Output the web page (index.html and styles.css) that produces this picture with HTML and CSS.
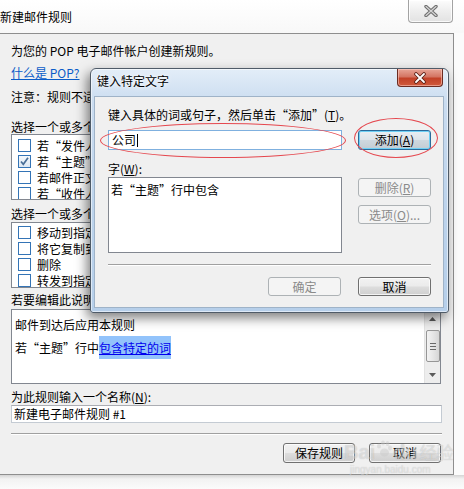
FILE: index.html
```html
<!DOCTYPE html>
<html lang="zh-CN">
<head>
<meta charset="utf-8">
<title>新建邮件规则</title>
<link rel="stylesheet" href="styles.css">
</head>
<body>
<div class="screen">
  <div class="win">
    <div class="win-title">
      <span class="win-title-text">新建邮件规则</span>
      <div class="win-close">
        <svg width="16" height="12" viewBox="0 0 16 12"><path d="M3 1.5 L13 10.5 M13 1.5 L3 10.5" stroke="#6e6e6e" stroke-width="3.4" stroke-linecap="round"/><path d="M3 1.5 L13 10.5 M13 1.5 L3 10.5" stroke="#d6d6d6" stroke-width="1.2" stroke-linecap="round"/></svg>
      </div>
    </div>
    <div class="win-main">
      <div class="client">
        <p class="t">为您的 POP 电子邮件帐户创建新规则。</p>
        <a class="t link" href="#">什么是 POP?</a>
        <p class="t note">注意：规则不适用于 IMAP、HTTP 或 Exchange 帐户。</p>
        <p class="t lbl1">选择一个或多个条件:</p>
        <div class="listbox lb1">
          <div class="item"><span class="cb"></span>若“发件人”行中包含特定的词</div>
          <div class="item"><span class="cb checked"><svg width="11" height="11" viewBox="0 0 11 11"><path d="M2 5.5 L4.3 8.3 L9 1.8" fill="none" stroke="#4a6f98" stroke-width="1.7"/></svg></span>若“主题”行中包含特定的词</div>
          <div class="item"><span class="cb"></span>若邮件正文中包含特定的词</div>
          <div class="item"><span class="cb"></span>若“收件人”行中包含特定的词</div>
        </div>
        <p class="t lbl2">选择一个或多个操作:</p>
        <div class="listbox lb2">
          <div class="item"><span class="cb"></span>移动到指定文件夹</div>
          <div class="item"><span class="cb"></span>将它复制到指定文件夹</div>
          <div class="item"><span class="cb"></span>删除</div>
          <div class="item"><span class="cb"></span>转发到指定人员或分发列表</div>
        </div>
        <p class="t lbl3">若要编辑此说明，请单击带下划线的值:</p>
        <div class="desc">
          <div class="desc-text">
            <div class="d1">邮件到达后应用本规则</div>
            <div class="d2">若“主题”行中<a class="hl" href="#">包含特定的词</a></div>
          </div>
          <div class="sb">
            <div class="sb-arrow"><svg width="7" height="4" viewBox="0 0 7 4"><path d="M0 4 L3.5 0 L7 4 Z" fill="#5a5a5a"/></svg></div>
            <div class="sb-thumb"><span></span><span></span><span></span></div>
            <div class="sb-arrow sb-down"><svg width="7" height="4" viewBox="0 0 7 4"><path d="M0 0 L3.5 4 L7 0 Z" fill="#5a5a5a"/></svg></div>
          </div>
        </div>
        <p class="t lbl4">为此规则输入一个名称(<u>N</u>):</p>
        <div class="name">新建电子邮件规则 #1</div>
        <div class="sep"></div>
        <div class="actions">
          <div class="btn">保存规则</div>
          <div class="btn">取消</div>
        </div>
      </div>
    </div>
    <div class="bottom-frame"></div>
  </div>

  <div class="dlg">
    <div class="dlg-title">
      <span class="dlg-title-text">键入特定文字</span>
      <div class="dlg-close">
        <svg width="16" height="12" viewBox="0 0 16 12"><path d="M4 2 L12 10 M12 2 L4 10" stroke="#5a2016" stroke-width="3.6" stroke-linecap="round"/><path d="M4 2 L12 10 M12 2 L4 10" stroke="#ffffff" stroke-width="1.8" stroke-linecap="round"/></svg>
      </div>
    </div>
    <div class="dlg-client">
      <p class="t prompt">键入具体的词或句子，然后单击“添加”(<u>T</u>)。</p>
      <div class="row1">
        <div class="input">公司<span class="caret"></span></div>
        <div class="btn btn-d focus">添加(<u>A</u>)</div>
      </div>
      <p class="t lbl-w">字(<u>W</u>):</p>
      <div class="row2">
        <div class="wordlist">若“主题”行中包含</div>
        <div class="side-btns">
          <div class="btn btn-d disabled">删除(<u>R</u>)</div>
          <div class="btn btn-d disabled">选项(<u>O</u>)...</div>
        </div>
      </div>
      <div class="dsep"></div>
      <div class="row3">
        <div class="btn btn-d disabled">确定</div>
        <div class="btn btn-d">取消</div>
      </div>
    </div>
  </div>

  <div class="ring ring1"></div>
  <div class="ring ring2"></div>

  <div class="watermark">
    <div class="wm-logo">Bai<svg class="paw" width="18" height="18" viewBox="0 0 18 18"><ellipse cx="4" cy="6" rx="2" ry="2.6"/><ellipse cx="8" cy="3" rx="2" ry="2.6"/><ellipse cx="12.5" cy="3.5" rx="2" ry="2.6"/><ellipse cx="15" cy="8" rx="2" ry="2.4"/><ellipse cx="9.5" cy="12.5" rx="4.5" ry="4"/></svg>du<span class="wm-cn">经验</span></div>
    <div class="wm-url">jingyan.baidu.com</div>
  </div>
</div>
</body>
</html>
```
FILE: styles.css
```css
* { box-sizing: border-box; }
html, body { margin: 0; padding: 0; }
body {
  width: 464px;
  height: 489px;
  overflow: hidden;
  background: #fbfbfb;
  font-family: "Noto Sans CJK SC", "Noto Sans", sans-serif;
  font-size: 12px;
  color: #000;
}
.screen {
  position: relative;
  width: 464px;
  height: 489px;
  overflow: hidden;
  background: #fbfbfb;
}
.t { margin: 0; line-height: 16px; white-space: nowrap; }
u { text-decoration: underline; }

/* main window */
.win-title {
  height: 33px;
  display: flex;
  align-items: center;
  background: linear-gradient(#ffffff, #f8f8f8);
}
.win-title-text { line-height: 16px; margin-top: 1px; white-space: nowrap; }
.win-close {
  margin-left: auto;
  margin-right: 11px;
  align-self: flex-start;
  width: 45px;
  height: 23px;
  border: 1px solid #a3a3a3;
  border-top: none;
  border-radius: 0 0 4px 4px;
  background: linear-gradient(#fdfdfd, #eeeeee 50%, #e2e2e2);
  box-shadow: inset 0 0 0 1px rgba(255,255,255,0.8);
  display: flex;
  align-items: center;
  justify-content: center;
}
.win-main { display: flex; }
.client {
  width: 454px;
  height: 442px;
  border: 1px solid #8e8e8e;
  border-left: none;
  background: #f0f0f0;
  padding: 9px 11px 0 11px;
}
.bottom-frame {
  height: 14px;
  background: linear-gradient(#d4d4d4, #f2f2f2 4px, #fbfbfb);
}
.link {
  display: block;
  width: max-content;
  color: #0a5cc8;
  text-decoration: underline;
  margin-top: 6px;
}
.note { margin-top: 8px; }
.lbl1 { margin-top: 15px; line-height: 14px; }
.listbox {
  height: 66px;
  border: 1px solid #828790;
  background: #fff;
  overflow: hidden;
}
.lb1 { padding-top: 2px; }
.lbl2 { margin-top: 7px; line-height: 14px; }
.lb2 { margin-top: 1px; padding-top: 1px; }
.item {
  display: flex;
  align-items: center;
  height: 16px;
  padding-left: 6px;
  white-space: nowrap;
}
.cb {
  width: 13px;
  height: 13px;
  border: 1px solid #3474b6;
  background: #fff;
  margin-right: 6px;
  flex: none;
  display: flex;
  align-items: center;
  justify-content: center;
}
.cb.checked { background: linear-gradient(#f4f8fc, #dde8f3); }
.lbl3 { margin-top: 4px; line-height: 15px; }
.desc {
  margin-top: 2px;
  width: 430px;
  height: 75px;
  border: 1px solid #828790;
  background: #fff;
  display: flex;
}
.desc-text { flex: 1; padding: 7px 3px 0 3px; white-space: nowrap; }
.d1 { line-height: 15px; }
.d2 { margin-top: 4px; line-height: 23px; }
.hl {
  display: inline-block;
  line-height: 23px;
  background: #92c3fb;
  color: #0000ee;
  text-decoration: underline;
}
.sb {
  width: 16px;
  background: #ededed;
  border-left: 1px solid #e2e2e2;
  display: flex;
  flex-direction: column;
}
.sb-arrow {
  height: 17px;
  display: flex;
  align-items: center;
  justify-content: center;
}
.sb-down { margin-top: auto; }
.sb-thumb {
  margin: 3px 0 0 1px;
  width: 14px;
  height: 32px;
  border: 1px solid #969696;
  border-radius: 2px;
  background: linear-gradient(90deg, #f3f3f3, #e6e6e6 50%, #d6d6d6);
  display: flex;
  flex-direction: column;
  align-items: center;
  justify-content: center;
  gap: 2px;
}
.sb-thumb span { display: block; width: 6px; height: 1px; background: #6a6a6a; }
.lbl4 { margin-top: 5px; line-height: 15px; }
.name {
  margin-top: 1px;
  height: 18px;
  border: 1px solid #c4cbd3;
  border-top-color: #abadb3;
  background: #fff;
  line-height: 16px;
  padding-left: 2px;
  white-space: nowrap;
}
.sep {
  margin-top: 10px;
  height: 2px;
  border-top: 1px solid #a0a0a0;
  border-bottom: 1px solid #ffffff;
}
.actions {
  margin-top: 8px;
  display: flex;
  justify-content: flex-end;
  gap: 14px;
  padding-right: 1px;
}

/* buttons */
.btn {
  width: 72px;
  height: 20px;
  border: 1px solid #707070;
  border-radius: 3px;
  background: linear-gradient(#f2f2f2, #ebebeb 48%, #dddddd 52%, #cfcfcf);
  box-shadow: inset 0 0 0 1px rgba(255,255,255,0.75);
  text-align: center;
  line-height: 18px;
  white-space: nowrap;
}
.btn-d { width: 73px; height: 19px; line-height: 17px; }
.row1 .btn-d { height: 20px; line-height: 18px; }
.btn.focus {
  border-color: #2b6a9a;
  background: linear-gradient(#e9eef2, #dde4ea 48%, #cfd8df 52%, #c3ccd3);
  box-shadow: inset 0 0 0 1px #6fd0f5;
}
.btn.disabled {
  border-color: #adb2b5;
  background: #f4f4f4;
  box-shadow: none;
  color: #8a8a8a;
}

/* dialog */
.dlg {
  position: absolute;
  left: 90px;
  top: 68px;
  width: 359px;
  height: 245px;
  border: 1px solid #4f5b68;
  border-radius: 6px 6px 3px 3px;
  background: linear-gradient(#e3edf8, #cadcf0 14%, #bcd3ec 60%, #b6cfea);
  box-shadow: -3px 5px 12px rgba(0,0,0,0.5), inset 0 0 0 1px rgba(255,255,255,0.55);
  padding: 0 5px 5px 4px;
  display: flex;
  flex-direction: column;
}
.dlg-title { height: 28px; display: flex; align-items: flex-start; }
.dlg-title-text {
  margin: 4px 0 0 2px;
  line-height: 16px;
  white-space: nowrap;
  text-shadow: 0 0 6px #ffffff, 0 0 3px #ffffff;
}
.dlg-close {
  margin-left: auto;
  width: 46px;
  height: 18px;
  border: 1px solid #6b2c22;
  border-top: none;
  border-radius: 0 0 4px 4px;
  background: linear-gradient(#e7a597, #d47563 45%, #c24128 55%, #cf5a3c);
  box-shadow: inset 0 0 0 1px rgba(255,210,200,0.55);
  display: flex;
  align-items: center;
  justify-content: center;
}
.dlg-client {
  height: 210px;
  background: #f0f0f0;
  padding: 0 12px 0 13px;
  box-shadow: 0 0 0 1px #9fb3c8;
}
.prompt { padding-top: 10px; }
.row1 { display: flex; gap: 16px; margin-top: 7px; }
.input {
  width: 234px;
  height: 20px;
  border: 1px solid #7fb0df;
  background: #fff;
  line-height: 18px;
  padding-left: 3px;
  display: flex;
  align-items: center;
  white-space: nowrap;
}
.caret { display: inline-block; width: 1px; height: 13px; background: #000; margin-left: 1px; }
.lbl-w { margin-top: 11px; }
.row2 { display: flex; gap: 16px; }
.wordlist {
  width: 234px;
  height: 76px;
  border: 1px solid #828790;
  background: #fff;
  padding: 4px 2px 0 2px;
  line-height: 16px;
  white-space: nowrap;
}
.side-btns { display: flex; flex-direction: column; gap: 8px; padding-top: 1px; }
.dsep {
  margin-top: 11px;
  height: 2px;
  border-top: 1px solid #a0a0a0;
  border-bottom: 1px solid #ffffff;
}
.row3 { display: flex; justify-content: flex-end; gap: 17px; margin-top: 11px; }

/* annotation rings */
.ring {
  position: absolute;
  border: 1.5px solid #e5484f;
  border-radius: 50%;
}
.ring1 { left: 100px; top: 123px; width: 246px; height: 35px; }
.ring2 { left: 354px; top: 118px; width: 84px; height: 40px; }

/* watermark */
.watermark {
  position: absolute;
  left: 344px;
  top: 440px;
  color: rgba(255,255,255,0.45);
  text-shadow: 0 0 1px rgba(0,0,0,0.22);
  white-space: nowrap;
}
.wm-logo {
  display: flex;
  align-items: center;
  font-family: "Liberation Sans", sans-serif;
  font-weight: bold;
  font-size: 20px;
  line-height: 24px;
}
.paw { fill: rgba(200,200,200,0.45); margin: -6px 0 0 0; }
.wm-cn { font-family: "Noto Sans CJK SC", sans-serif; font-size: 17px; font-weight: normal; margin-left: 2px; }
.wm-url { font-family: "Liberation Sans", sans-serif; font-size: 10px; line-height: 12px; margin-left: 6px; }
```
